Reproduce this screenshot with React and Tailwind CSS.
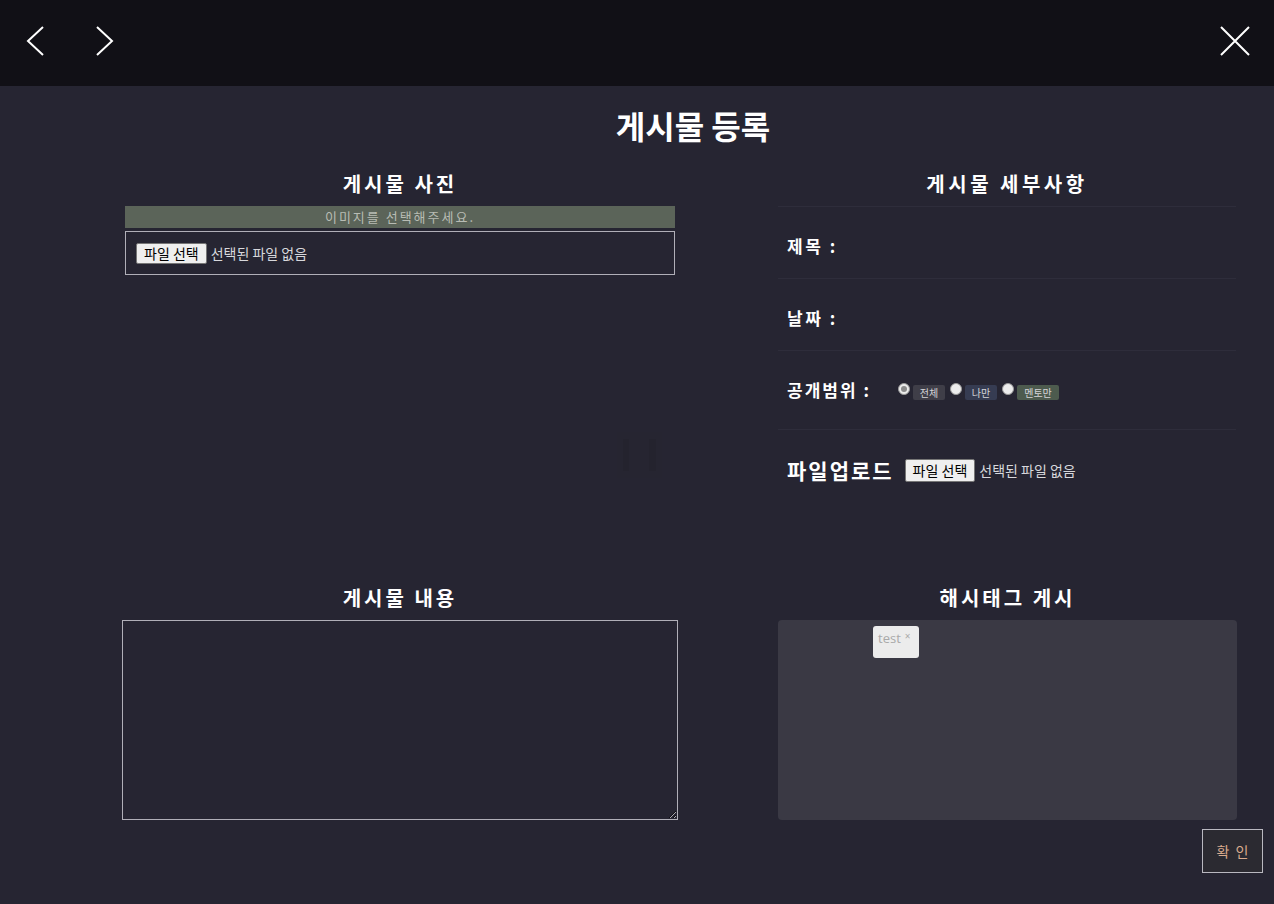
export default function App() {
  const font = { fontFamily: '"Noto Sans CJK KR", "Noto Sans", sans-serif' };
  return (
    <div className="w-[1274px] h-[904px] bg-[#262532] text-white overflow-hidden" style={font}>
      {/* top bar */}
      <header className="h-[86px] bg-[#111016] flex items-start justify-between">
        <div className="flex">
          <svg width="160" height="86" viewBox="0 0 160 86" fill="none" stroke="white" strokeWidth="2">
            <path d="M43 27 L28 41 L43 55" />
            <path d="M97 27 L112 41 L97 55" />
          </svg>
        </div>
        <svg width="60" height="86" viewBox="1214 0 60 86" fill="none" stroke="white" strokeWidth="2">
          <path d="M1221 27 L1249 55 M1249 27 L1221 55" />
        </svg>
      </header>

      <h1 className="pt-[19px] pl-[112px] text-center text-[32px] leading-[40px] font-bold">게시물 등록</h1>

      {/* top section */}
      <div className="mt-[25px] h-[414px] grid grid-cols-[550px_458px] gap-x-[103px] pl-[125px]">
        {/* left */}
        <div className="flex flex-col">
          <h2 className="h-[28px] leading-[28px] text-center text-[20px] font-bold tracking-[3px]">게시물 사진</h2>
          <div className="mt-[8px] h-[22px] bg-[#5b6459] text-center text-[13px] leading-[22px] tracking-[2px] text-[#b8bcb4]">
            이미지를 선택해주세요.
          </div>
          <div className="mt-[3px] h-[44px] border border-[#b0afb8] flex items-center pl-[10px] gap-[4px]">
            <span className="h-[21px] px-[7px] bg-[#efefef] border border-[#767676] rounded-[2px] text-[14px] leading-[19px] text-black">파일 선택</span>
            <span className="text-[14px] text-[#d8d8dc]">선택된 파일 없음</span>
          </div>
          <div className="mt-[157px] ml-[492px] w-[45px] h-[46px] bg-[#262531] flex items-center justify-center gap-[20px]">
            <span className="w-[6px] h-[32px] bg-[#24232e]" />
            <span className="w-[7px] h-[32px] bg-[#24232e]" />
          </div>
        </div>

        {/* right */}
        <div className="flex flex-col">
          <h2 className="h-[28px] leading-[28px] text-center text-[20px] font-bold tracking-[3.5px]">게시물 세부사항</h2>
          <div className="mt-[8px] border-t border-[#2e2d3b] h-[72px] flex items-center pl-[9px] pt-[6px]">
            <span className="text-[17px] font-bold tracking-[2.5px]">제목 :</span>
          </div>
          <div className="border-t border-[#2e2d3b] h-[72px] flex items-center pl-[9px] pt-[6px]">
            <span className="text-[17px] font-bold tracking-[2.5px]">날짜 :</span>
          </div>
          <div className="border-t border-[#2e2d3b] h-[79px] flex items-center pl-[9px]">
            <span className="text-[17px] font-bold tracking-[2px] w-[111px]">공개범위 :</span>
            <div className="flex pt-[4px]">
              <Radio checked label="전체" bg="bg-[#3f3e48]" w="w-[32px]" />
              <Radio label="나만" bg="bg-[#363c52]" w="w-[32px]" />
              <Radio label="멘토만" bg="bg-[#4d5b4e]" w="w-[42px]" />
            </div>
          </div>
          <div className="border-t border-[#2e2d3b] h-[82px] flex items-center pl-[9px]">
            <span className="text-[21px] font-bold tracking-[2px] mr-[11px]">파일업로드</span>
            <span className="h-[23px] px-[7px] bg-[#efefef] border border-[#767676] rounded-[2px] text-[14px] leading-[21px] text-black">파일 선택</span>
            <span className="ml-[4px] text-[14px] text-[#d8d8dc]">선택된 파일 없음</span>
          </div>
        </div>
      </div>

      {/* bottom section */}
      <div className="grid grid-cols-[556px_459px] gap-x-[100px] pl-[122px]">
        <div className="flex flex-col">
          <h2 className="h-[28px] leading-[28px] text-center text-[20px] font-bold tracking-[3px]">게시물 내용</h2>
          <textarea className="mt-[8px] h-[200px] border border-[#b0afb8] bg-transparent resize-y outline-none" />
        </div>
        <div className="flex flex-col">
          <h2 className="h-[28px] leading-[28px] text-center text-[20px] font-bold tracking-[3px]">해시태그 게시</h2>
          <div className="mt-[8px] h-[200px] bg-[#3a3944] rounded-[4px] pt-[6px] pl-[95px]">
            <div className="w-[46px] h-[32px] bg-[#ececec] rounded-[3px] flex items-start pt-[3px] pl-[5px] text-[#a9a9a9]" style={{ fontFamily: '"Open Sans", sans-serif' }}>
              <span className="text-[13px] leading-[18px]">test</span>
              <span className="ml-[4px] text-[10px] leading-[14px]">×</span>
            </div>
          </div>
        </div>
      </div>

      <div className="flex justify-end pr-[11px] mt-[9px]">
        <button className="w-[61px] h-[44px] border border-[#b9b8c0] bg-[#2b2a31] text-[#d9ab8e] text-[14px] tracking-[6px] pl-[6px]">확인</button>
      </div>
    </div>
  );
}

function Radio({ checked, label, bg, w }) {
  return (
    <span className="flex items-start mr-[5px]">
      <span className="mt-[-2px] w-[12px] h-[12px] rounded-full bg-[#ececec] border border-[#9a9a9a] flex items-center justify-center">
        {checked && <span className="w-[6px] h-[6px] rounded-full bg-[#8a8a8a]" />}
      </span>
      <span className={`ml-[3px] ${w} h-[15px] ${bg} rounded-[2px] text-[10px] leading-[15px] text-center text-[#d5d5d8]`}>{label}</span>
    </span>
  );
}
